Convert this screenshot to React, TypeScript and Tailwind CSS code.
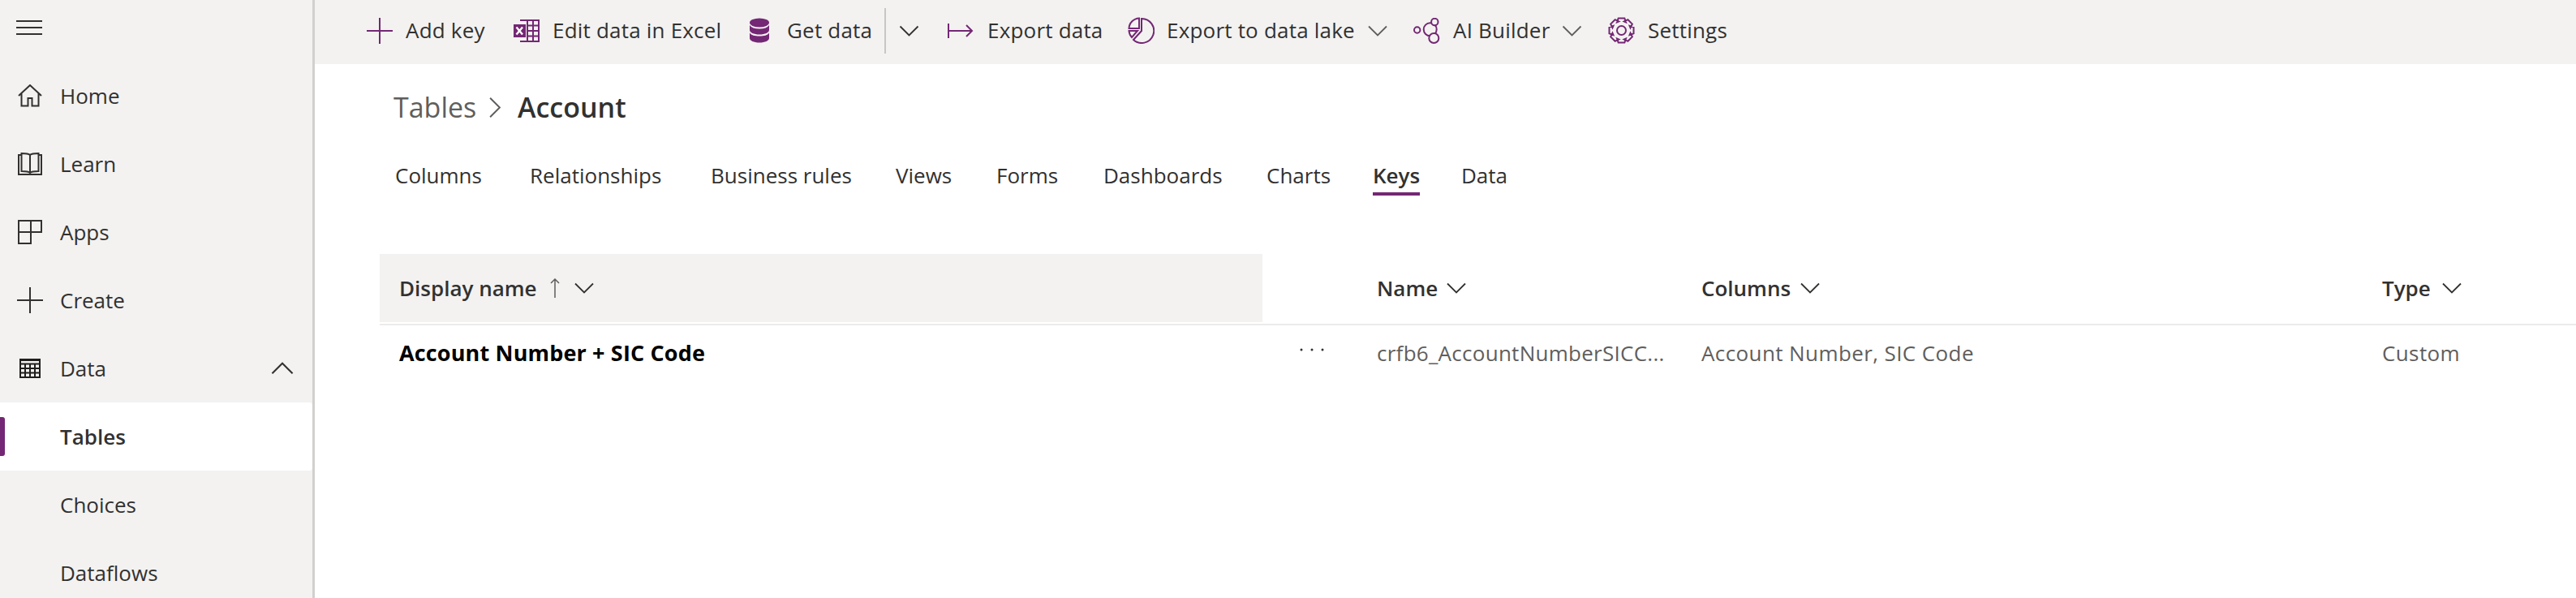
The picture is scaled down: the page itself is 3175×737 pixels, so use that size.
import React from "react";

const PURPLE = "#742774";

// 8 tooth gear, built once so the teeth stay even
const gearPath = (() => {
  const points: string[] = [];
  for (let i = 0; i < 8; i++) {
    const mid = (i * Math.PI) / 4;
    [
      [mid - 0.5, 11.5],
      [mid - 0.25, 15.5],
      [mid + 0.25, 15.5],
      [mid + 0.5, 11.5],
    ].forEach(([angle, radius]) => {
      points.push(`${(16.5 + radius * Math.sin(angle)).toFixed(2)} ${(16.5 - radius * Math.cos(angle)).toFixed(2)}`);
    });
  }
  return `M${points.join("L")}Z`;
})();

const Chevron = ({ className }: { className?: string }) => (
  <svg viewBox="0 0 24 14" className={className} fill="none" stroke="currentColor" strokeWidth="1.8">
    <path d="M1 1.5 12 12.5 23 1.5" />
  </svg>
);

const PlusIcon = ({ className }: { className?: string }) => (
  <svg viewBox="0 0 32 32" className={className} fill="none" stroke="currentColor" strokeWidth="2">
    <path d="M16 0v32M0 16h32" />
  </svg>
);

const navIcons: Record<string, React.ReactNode> = {
  Home: (
    <svg viewBox="0 0 30 28" className="h-[28px] w-[30px]" fill="none" stroke="#323130" strokeWidth="2">
      <path d="M1 14 15 1l14 13M4.500 11.500V26.500H12.500V17h5v9.500h8V11.500" />
    </svg>
  ),
  Learn: (
    <svg viewBox="0 0 30 28" className="h-[28px] w-[30px]" fill="none" stroke="#323130" strokeWidth="2">
      <path d="M4.500 3H1v24h28V3h-3.500M15 25c-2-2-6-2-10.500-2V1C9 1 13 1 15 3c2-2 6-2 10.500-2v22C21 23 17 23 15 25ZM15 3v22" />
    </svg>
  ),
  Apps: (
    <svg viewBox="0 0 30 30" className="h-[30px] w-[30px]" fill="none" stroke="#323130" strokeWidth="2">
      <path d="M1 1h28v14H16v14H1ZM1 15h15M16 1v14" />
    </svg>
  ),
  Create: <PlusIcon className="h-[32px] w-[32px] text-[#323130]" />,
  Data: (
    <svg viewBox="0 0 26 24" className="h-[24px] w-[26px]" fill="none" stroke="#201f1e" strokeWidth="2">
      <path d="M1 1h24v22H1ZM1 6.500h24M1 12h24M1 17.500h24M7 6.500V23M13 6.500V23M19 6.500V23" />
      <path d="M1 1.500h24" strokeWidth="3" />
    </svg>
  ),
};

const navItems = ["Home", "Learn", "Apps", "Create", "Data"];
const subItems = ["Tables", "Choices", "Dataflows"];

const tabs = [
  { label: "Columns", width: "w-[166px]" },
  { label: "Relationships", width: "w-[223px]" },
  { label: "Business rules", width: "w-[228px]" },
  { label: "Views", width: "w-[124px]" },
  { label: "Forms", width: "w-[132px]" },
  { label: "Dashboards", width: "w-[201px]" },
  { label: "Charts", width: "w-[131px]" },
  { label: "Keys", width: "w-[109px]", active: true },
  { label: "Data", width: "w-[60px]" },
];

const Sidebar = () => (
  <aside className="h-[737px] w-[388px] shrink-0 overflow-hidden border-r-[3px] border-[#d2d0ce] bg-[#f3f2f1]">
    <div className="flex h-[76px] flex-col justify-center gap-[6px] pb-[8px] pl-[20px]">
      <span className="h-[2px] w-[32px] bg-[#323130]" />
      <span className="h-[2px] w-[32px] bg-[#323130]" />
      <span className="h-[2px] w-[32px] bg-[#323130]" />
    </div>
    {navItems.map((item) => (
      <div key={item} className="flex h-[84px] items-center">
        <span className="flex w-[74px] shrink-0 justify-center">{navIcons[item]}</span>
        <span>{item}</span>
        {item === "Data" && <Chevron className="mr-[23px] ml-auto h-[16px] w-[28px] rotate-180 text-[#323130]" />}
      </div>
    ))}
    {subItems.map((item) => (
      <div
        key={item}
        className={
          item === "Tables"
            ? "relative flex h-[84px] items-center rounded-r-[4px] bg-white pl-[74px] font-semibold"
            : "flex h-[84px] items-center pl-[74px]"
        }
      >
        {item === "Tables" && <span className="absolute top-[18px] left-0 h-[48px] w-[6px] rounded-r-[3px] bg-[#742774]" />}
        {item}
      </div>
    ))}
  </aside>
);

const Toolbar = () => (
  <div className="flex h-[79px] items-center bg-[#f3f2f1] pb-[4px] pl-[64px] tracking-[0.2px] text-[#323130]">
    <PlusIcon className="mr-[16px] h-[32px] w-[32px] text-[#742774]" />
    <span className="w-[133px] whitespace-nowrap">Add key</span>
    <svg viewBox="0 0 32 28" className="mr-[16px] h-[28px] w-[32px]">
      <path d="M8 1h23v26H8M17 1v26M24 1v26M17 7.500h14M17 14h14M17 20.500h14" fill="none" stroke={PURPLE} strokeWidth="2" />
      <rect x="0" y="6" width="15" height="16" fill={PURPLE} />
      <path d="m3.500 9.500 7.500 9M11 9.500l-7.500 9" stroke="#fff" strokeWidth="2.400" />
    </svg>
    <span className="w-[241px] whitespace-nowrap">Edit data in Excel</span>
    <svg viewBox="0 0 28 32" className="mr-[20px] h-[32px] w-[28px]" fill={PURPLE}>
      <ellipse cx="14" cy="6" rx="12" ry="5.500" />
      <path d="M2 9c2 3 6 4.500 12 4.500S24 12 26 9v6c0 3-5 5.500-12 5.500S2 18 2 15Z" />
      <path d="M2 18.500c2 3 6 4 12 4s10-1 12-4V25c0 3-5 5.500-12 5.500S2 28 2 25Z" />
    </svg>
    <span className="w-[120px] whitespace-nowrap">Get data</span>
    <span className="h-[56px] w-[2px] bg-[#c8c6c4]" />
    <Chevron className="mr-[35px] ml-[16px] h-[14px] w-[25px] text-[#323130]" />
    <svg viewBox="0 0 32 18" className="mr-[17px] h-[18px] w-[32px]" fill="none" stroke={PURPLE} strokeWidth="2">
      <path d="M1 0v18M1 9h29M23 2l7 7-7 7" />
    </svg>
    <span className="w-[173px] whitespace-nowrap">Export data</span>
    <svg viewBox="0 0 33 33" className="mr-[15px] h-[33px] w-[33px]" fill="none" stroke={PURPLE} strokeWidth="2">
      <path d="M17 2A15 15 0 1 1 7 28L17 17Z" />
      <path d="M14 1.500A13 13 0 0 0 1.500 14H14Z" />
      <path d="M1.500 17H12L5 25A13 13 0 0 1 1.500 17Z" />
    </svg>
    <span className="w-[248px] whitespace-nowrap">Export to data lake</span>
    <Chevron className="mr-[32px] h-[14px] w-[24px] text-[#605e5c]" />
    <svg viewBox="0 0 34 32" className="mr-[15px] h-[32px] w-[34px]" fill="#f3f2f1" stroke={PURPLE} strokeWidth="2">
      <circle cx="4.700" cy="15" r="3.700" />
      <circle cx="20.700" cy="14.300" r="8" />
      <circle cx="26.300" cy="5" r="4.200" />
      <circle cx="25.300" cy="25" r="6" />
    </svg>
    <span className="w-[134px] whitespace-nowrap">AI Builder</span>
    <Chevron className="mr-[32px] h-[14px] w-[25px] text-[#605e5c]" />
    <svg viewBox="0 0 33 33" className="mr-[16px] h-[33px] w-[33px]" fill="none" stroke={PURPLE} strokeWidth="2">
      <path d={gearPath} />
      <circle cx="16.500" cy="16.500" r="5.500" />
    </svg>
    <span className="whitespace-nowrap">Settings</span>
  </div>
);

const HeaderLabel = ({ label, width }: { label: string; width: string }) => (
  <div className="flex items-center font-semibold">
    <span className={width}>{label}</span>
    <Chevron className="h-[14px] w-[24px] text-[#323130]" />
  </div>
);

const KeysTable = () => (
  <div className="mt-[68px] ml-[80px]">
    <div className="grid h-[88px] grid-cols-[1229px_400px_839px_1fr] items-center border-b-[2px] border-[#edebe9] pb-[2px]">
      <div className="flex h-[84px] w-[1088px] items-center bg-[#f3f2f1] pl-[24px] font-semibold">
        <span className="w-[190px]">Display name</span>
        <span className="flex w-[26px]">
          <svg viewBox="0 0 12 24" className="-ml-[4px] h-[24px] w-[12px]" fill="none" stroke="#605e5c" strokeWidth="1.500">
            <path d="M6 24V1M1 6l5-5 5 5" />
          </svg>
        </span>
        <Chevron className="h-[14px] w-[24px] text-[#323130]" />
      </div>
      <HeaderLabel label="Name" width="w-[86px]" />
      <HeaderLabel label="Columns" width="w-[122px]" />
      <HeaderLabel label="Type" width="w-[74px]" />
    </div>
    <div className="grid h-[70px] grid-cols-[1134px_95px_400px_839px_1fr] items-center pb-[2px] tracking-[0.4px] text-[#605e5c]">
      <span className="pl-[24px] text-[27px] font-bold tracking-[0.15px] text-black">Account Number + SIC Code</span>
      <svg viewBox="0 0 30 4" className="mb-[8px] h-[4px] w-[30px]" fill="#323130">
        <circle cx="2" cy="2" r="1.500" />
        <circle cx="15" cy="2" r="1.500" />
        <circle cx="28" cy="2" r="1.500" />
      </svg>
      <span className="whitespace-nowrap tracking-[0.27px]">crfb6_AccountNumberSICC...</span>
      <span>Account Number, SIC Code</span>
      <span>Custom</span>
    </div>
  </div>
);

export default function App() {
  return (
    <div className="flex h-[737px] w-[3175px] overflow-hidden bg-white font-['Open_Sans','Liberation_Sans',sans-serif] text-[26px] text-[#323130]">
      <Sidebar />
      <main className="min-w-0 flex-1">
        <Toolbar />
        <div className="flex h-[106px] items-center pl-[97px] text-[34px]">
          <span className="w-[111px] text-[#605e5c]">Tables</span>
          <Chevron className="mr-[14px] h-[15px] w-[28px] -rotate-90 text-[#605e5c]" />
          <span className="font-semibold">Account</span>
        </div>
        <div className="flex h-[60px] pl-[99px]">
          {tabs.map((tab) => (
            <div key={tab.label} className={`${tab.width} flex shrink-0 flex-col`}>
              <span className={`flex h-[56px] w-fit items-center border-b-[4px] pt-[10px] ${tab.active ? "border-[#742774] font-semibold" : "border-transparent"}`}>
                {tab.label}
              </span>
            </div>
          ))}
        </div>
        <KeysTable />
      </main>
    </div>
  );
}
